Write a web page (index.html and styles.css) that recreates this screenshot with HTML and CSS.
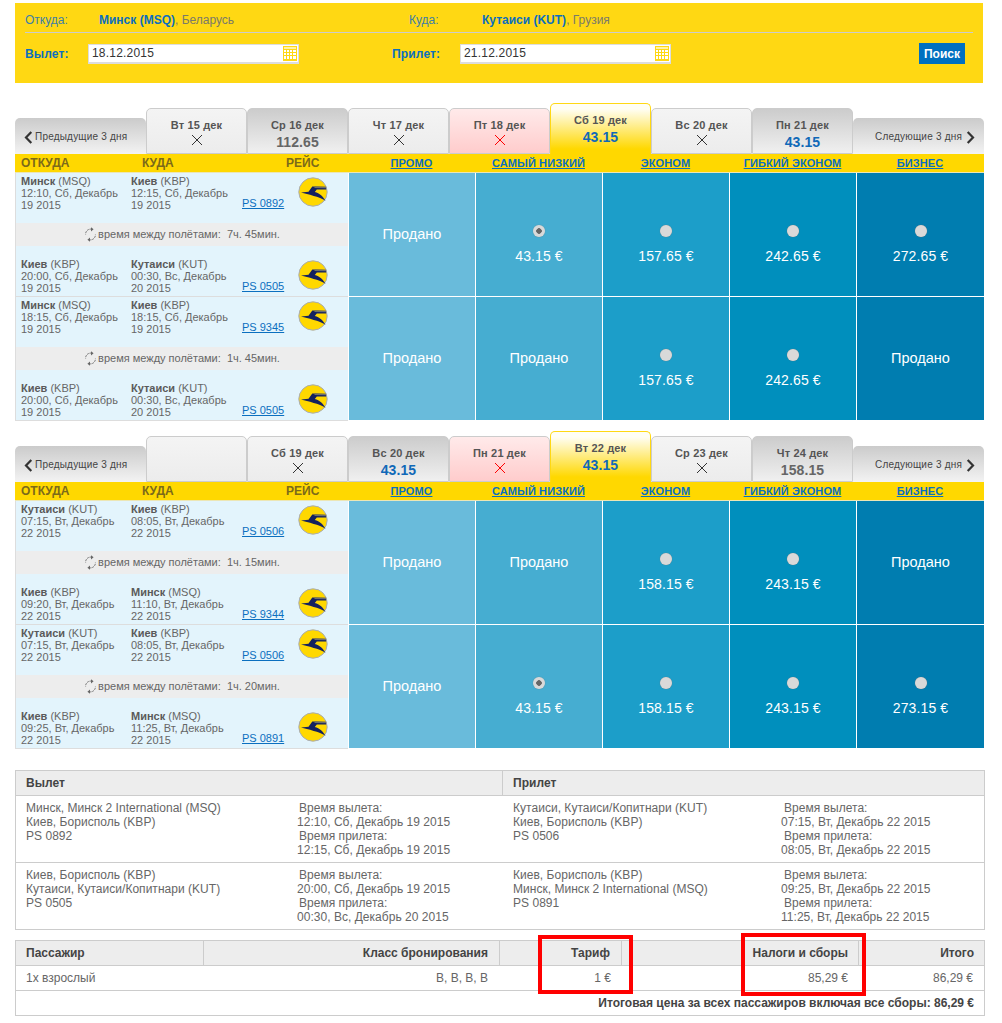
FILE: index.html
```html
<!DOCTYPE html>
<html lang="ru">
<head>
<meta charset="utf-8">
<title>Выбор рейса</title>
<link rel="stylesheet" href="styles.css">
</head>
<body>
<svg class="defs" width="0" height="0" aria-hidden="true">
  <defs>
    <symbol id="logo" viewBox="0 0 30 30">
      <circle cx="15" cy="15" r="14.2" fill="#ffd800" stroke="#a9adb5" stroke-width="1"/>
      <path d="M3 15.5 L10.5 14.8 L14.3 9.4 L28 9.8 L28.2 12.4 L18.8 12.4 L16.8 15 C21.5 16 25.4 19.6 27.6 24 C23 20.8 17 19 3 15.5Z" fill="#14215f"/>
      <path d="M17 9.5 L28 9.9 L28.2 11.2 L16.2 11Z" fill="#6d6f6e"/>
    </symbol>
    <symbol id="cross" viewBox="0 0 12 12">
      <path d="M1 1 L11 11 M11 1 L1 11" fill="none" stroke="currentColor" stroke-width="1"/>
    </symbol>
    <symbol id="cal" viewBox="0 0 14 15">
      <rect width="14" height="15" fill="#ffd813"/>
      <rect x="1" y="1" width="12" height="2" fill="#fff3a8"/>
      <g fill="#fff">
        <rect x="1" y="4" width="2" height="2"/><rect x="4" y="4" width="2" height="2"/><rect x="7" y="4" width="2" height="2"/><rect x="10" y="4" width="3" height="2"/>
        <rect x="1" y="7" width="2" height="2"/><rect x="4" y="7" width="2" height="2"/><rect x="7" y="7" width="2" height="2"/><rect x="10" y="7" width="3" height="2"/>
        <rect x="1" y="10" width="2" height="3"/><rect x="4" y="10" width="2" height="3"/><rect x="7" y="10" width="2" height="3"/><rect x="10" y="10" width="3" height="3"/>
      </g>
    </symbol>
    <symbol id="swap" viewBox="0 0 13 15">
      <path d="M7.5 2.2 A5 5 0 0 0 1.6 7.5 M5.5 12.8 A5 5 0 0 0 11.4 7.5" fill="none" stroke="#777" stroke-width="1" stroke-dasharray="2 .8"/>
      <path d="M7 .2 L9.6 2.3 L7 4.4Z M6 10.6 L3.4 12.7 L6 14.8Z" fill="#666"/>
    </symbol>
    <symbol id="chev-l" viewBox="0 0 9 13">
      <path d="M7.3 1 L2 6.5 L7.3 12" fill="none" stroke="#333" stroke-width="2.2"/>
    </symbol>
    <symbol id="chev-r" viewBox="0 0 9 13">
      <path d="M1.7 1 L7 6.5 L1.7 12" fill="none" stroke="#333" stroke-width="2.2"/>
    </symbol>
  </defs>
</svg>

<main class="page">
  <section class="search">
    <div class="search-route">
      <span class="lbl">Откуда:</span>
      <span class="place"><b>Минск (MSQ)</b>, Беларусь</span>
      <span class="lbl">Куда:</span>
      <span class="place"><b>Кутаиси (KUT)</b>, Грузия</span>
    </div>
    <div class="search-dates">
      <span class="lbl-b">Вылет:</span>
      <span class="date"><span>18.12.2015</span><svg class="cal"><use href="#cal"/></svg></span>
      <span class="lbl-b">Прилет:</span>
      <span class="date"><span>21.12.2015</span><svg class="cal"><use href="#cal"/></svg></span>
      <button class="go" type="button">Поиск</button>
    </div>
  </section>

  <section class="fares fares-out">
    <div class="tabs">
      <div class="nav nav-prev"><svg class="chev"><use href="#chev-l"/></svg>Предыдущие 3 дня</div>
      <div class="tab"><span class="d">Вт 15 дек</span><svg class="x"><use href="#cross"/></svg></div>
      <div class="tab tab-price"><span class="d">Ср 16 дек</span><span class="v">112.65</span></div>
      <div class="tab"><span class="d">Чт 17 дек</span><svg class="x"><use href="#cross"/></svg></div>
      <div class="tab tab-red"><span class="d">Пт 18 дек</span><svg class="x"><use href="#cross"/></svg></div>
      <div class="tab tab-sel"><span class="d">Сб 19 дек</span><span class="v v-blue">43.15</span></div>
      <div class="tab"><span class="d">Вс 20 дек</span><svg class="x"><use href="#cross"/></svg></div>
      <div class="tab tab-price"><span class="d">Пн 21 дек</span><span class="v v-blue">43.15</span></div>
      <div class="nav nav-next">Следующие 3 дня<svg class="chev"><use href="#chev-r"/></svg></div>
    </div>
    <div class="head">
      <div class="head-left"><span>ОТКУДА</span><span>КУДА</span><span>РЕЙС</span></div>
      <a href="#">ПРОМО</a><a href="#">САМЫЙ НИЗКИЙ</a><a href="#">ЭКОНОМ</a><a href="#">ГИБКИЙ ЭКОНОМ</a><a href="#">БИЗНЕС</a>
    </div>

    <div class="row">
      <div class="trip">
        <div class="seg seg-a">
          <div class="pt"><b>Минск</b> (MSQ)<br>12:10, Сб, Декабрь<br>19 2015</div>
          <div class="pt"><b>Киев</b> (KBP)<br>12:15, Сб, Декабрь<br>19 2015</div>
          <a class="no" href="#">PS 0892</a>
          <svg class="logo"><use href="#logo"/></svg>
        </div>
        <div class="conn"><svg class="swap"><use href="#swap"/></svg>время между полётами:&nbsp; 7ч. 45мин.</div>
        <div class="seg seg-b">
          <div class="pt"><b>Киев</b> (KBP)<br>20:00, Сб, Декабрь<br>19 2015</div>
          <div class="pt"><b>Кутаиси</b> (KUT)<br>00:30, Вс, Декабрь<br>20 2015</div>
          <a class="no" href="#">PS 0505</a>
          <svg class="logo"><use href="#logo"/></svg>
        </div>
      </div>
      <div class="fare c1 sold">Продано</div>
      <div class="fare c2"><i class="radio on"></i><span>43.15 €</span></div>
      <div class="fare c3"><i class="radio"></i><span>157.65 €</span></div>
      <div class="fare c4"><i class="radio"></i><span>242.65 €</span></div>
      <div class="fare c5"><i class="radio"></i><span>272.65 €</span></div>
    </div>

    <div class="row">
      <div class="trip">
        <div class="seg seg-a">
          <div class="pt"><b>Минск</b> (MSQ)<br>18:15, Сб, Декабрь<br>19 2015</div>
          <div class="pt"><b>Киев</b> (KBP)<br>18:15, Сб, Декабрь<br>19 2015</div>
          <a class="no" href="#">PS 9345</a>
          <svg class="logo"><use href="#logo"/></svg>
        </div>
        <div class="conn"><svg class="swap"><use href="#swap"/></svg>время между полётами:&nbsp; 1ч. 45мин.</div>
        <div class="seg seg-b">
          <div class="pt"><b>Киев</b> (KBP)<br>20:00, Сб, Декабрь<br>19 2015</div>
          <div class="pt"><b>Кутаиси</b> (KUT)<br>00:30, Вс, Декабрь<br>20 2015</div>
          <a class="no" href="#">PS 0505</a>
          <svg class="logo"><use href="#logo"/></svg>
        </div>
      </div>
      <div class="fare c1 sold">Продано</div>
      <div class="fare c2 sold">Продано</div>
      <div class="fare c3"><i class="radio"></i><span>157.65 €</span></div>
      <div class="fare c4"><i class="radio"></i><span>242.65 €</span></div>
      <div class="fare c5 sold">Продано</div>
    </div>
  </section>

  <section class="fares fares-back">
    <div class="tabs">
      <div class="nav nav-prev"><svg class="chev"><use href="#chev-l"/></svg>Предыдущие 3 дня</div>
      <div class="tab"></div>
      <div class="tab"><span class="d">Сб 19 дек</span><svg class="x"><use href="#cross"/></svg></div>
      <div class="tab tab-price"><span class="d">Вс 20 дек</span><span class="v v-blue">43.15</span></div>
      <div class="tab tab-red"><span class="d">Пн 21 дек</span><svg class="x"><use href="#cross"/></svg></div>
      <div class="tab tab-sel"><span class="d">Вт 22 дек</span><span class="v v-blue">43.15</span></div>
      <div class="tab"><span class="d">Ср 23 дек</span><svg class="x"><use href="#cross"/></svg></div>
      <div class="tab tab-price"><span class="d">Чт 24 дек</span><span class="v">158.15</span></div>
      <div class="nav nav-next">Следующие 3 дня<svg class="chev"><use href="#chev-r"/></svg></div>
    </div>
    <div class="head">
      <div class="head-left"><span>ОТКУДА</span><span>КУДА</span><span>РЕЙС</span></div>
      <a href="#">ПРОМО</a><a href="#">САМЫЙ НИЗКИЙ</a><a href="#">ЭКОНОМ</a><a href="#">ГИБКИЙ ЭКОНОМ</a><a href="#">БИЗНЕС</a>
    </div>

    <div class="row">
      <div class="trip">
        <div class="seg seg-a">
          <div class="pt"><b>Кутаиси</b> (KUT)<br>07:15, Вт, Декабрь<br>22 2015</div>
          <div class="pt"><b>Киев</b> (KBP)<br>08:05, Вт, Декабрь<br>22 2015</div>
          <a class="no" href="#">PS 0506</a>
          <svg class="logo"><use href="#logo"/></svg>
        </div>
        <div class="conn"><svg class="swap"><use href="#swap"/></svg>время между полётами:&nbsp; 1ч. 15мин.</div>
        <div class="seg seg-b">
          <div class="pt"><b>Киев</b> (KBP)<br>09:20, Вт, Декабрь<br>22 2015</div>
          <div class="pt"><b>Минск</b> (MSQ)<br>11:10, Вт, Декабрь<br>22 2015</div>
          <a class="no" href="#">PS 9344</a>
          <svg class="logo"><use href="#logo"/></svg>
        </div>
      </div>
      <div class="fare c1 sold">Продано</div>
      <div class="fare c2 sold">Продано</div>
      <div class="fare c3"><i class="radio"></i><span>158.15 €</span></div>
      <div class="fare c4"><i class="radio"></i><span>243.15 €</span></div>
      <div class="fare c5 sold">Продано</div>
    </div>

    <div class="row">
      <div class="trip">
        <div class="seg seg-a">
          <div class="pt"><b>Кутаиси</b> (KUT)<br>07:15, Вт, Декабрь<br>22 2015</div>
          <div class="pt"><b>Киев</b> (KBP)<br>08:05, Вт, Декабрь<br>22 2015</div>
          <a class="no" href="#">PS 0506</a>
          <svg class="logo"><use href="#logo"/></svg>
        </div>
        <div class="conn"><svg class="swap"><use href="#swap"/></svg>время между полётами:&nbsp; 1ч. 20мин.</div>
        <div class="seg seg-b">
          <div class="pt"><b>Киев</b> (KBP)<br>09:25, Вт, Декабрь<br>22 2015</div>
          <div class="pt"><b>Минск</b> (MSQ)<br>11:25, Вт, Декабрь<br>22 2015</div>
          <a class="no" href="#">PS 0891</a>
          <svg class="logo"><use href="#logo"/></svg>
        </div>
      </div>
      <div class="fare c1 sold">Продано</div>
      <div class="fare c2"><i class="radio on"></i><span>43.15 €</span></div>
      <div class="fare c3"><i class="radio"></i><span>158.15 €</span></div>
      <div class="fare c4"><i class="radio"></i><span>243.15 €</span></div>
      <div class="fare c5"><i class="radio"></i><span>273.15 €</span></div>
    </div>
  </section>

  <section class="legs">
    <div class="legs-head"><div>Вылет</div><div>Прилет</div></div>
    <div class="legs-row">
      <div class="leg">
        <div>Минск, Минск 2 International (MSQ)<br>Киев, Борисполь (KBP)<br>PS 0892</div>
        <div class="times"><span>Время вылета:</span><br>12:10, Сб, Декабрь 19 2015<br><span>Время прилета:</span><br>12:15, Сб, Декабрь 19 2015</div>
      </div>
      <div class="leg">
        <div>Кутаиси, Кутаиси/Копитнари (KUT)<br>Киев, Борисполь (KBP)<br>PS 0506</div>
        <div class="times"><span>Время вылета:</span><br>07:15, Вт, Декабрь 22 2015<br><span>Время прилета:</span><br>08:05, Вт, Декабрь 22 2015</div>
      </div>
    </div>
    <div class="legs-row">
      <div class="leg">
        <div>Киев, Борисполь (KBP)<br>Кутаиси, Кутаиси/Копитнари (KUT)<br>PS 0505</div>
        <div class="times"><span>Время вылета:</span><br>20:00, Сб, Декабрь 19 2015<br><span>Время прилета:</span><br>00:30, Вс, Декабрь 20 2015</div>
      </div>
      <div class="leg">
        <div>Киев, Борисполь (KBP)<br>Минск, Минск 2 International (MSQ)<br>PS 0891</div>
        <div class="times"><span>Время вылета:</span><br>09:25, Вт, Декабрь 22 2015<br><span>Время прилета:</span><br>11:25, Вт, Декабрь 22 2015</div>
      </div>
    </div>
  </section>

  <section class="price">
    <div class="price-head">
      <div class="left">Пассажир</div><div>Класс бронирования</div><div>Тариф</div><div>Налоги и сборы</div><div>Итого</div>
    </div>
    <div class="price-row">
      <div class="left">1x взрослый</div><div>B, B, B, B</div><div>1 €</div><div>85,29 €</div><div>86,29 €</div>
    </div>
    <div class="price-total">Итоговая цена за всех пассажиров включая все сборы: 86,29 €</div>
    <div class="mark mark-fare"></div>
    <div class="mark mark-tax"></div>
  </section>
</main>
</body>
</html>
```
FILE: styles.css
```css
* { box-sizing: border-box; }
html, body { margin: 0; padding: 0; background: #fff; }
body { font: 12px/14px "Liberation Sans", Arial, sans-serif; color: #666; }
.defs { position: absolute; }
.page { width: 970px; margin: 3px 0 0 15px; }

/* search panel */
.search { height: 80px; width: 968px; background: #ffd813; padding: 0 10px; }
.search-route {
  display: grid; grid-template-columns: 74px 310px 73px 1fr;
  height: 30px; align-items: center; border-bottom: 1px solid #ccc; padding-top: 4px;
}
.lbl { color: #3d7fa6; }
.place { color: #7a7a6a; }
.place b { color: #0b6fbf; }
.search-dates {
  display: grid; grid-template-columns: 63px 304px 68px 459px 46px;
  align-items: center; margin-top: 10px;
}
.lbl-b { font-weight: bold; color: #0b6fbf; letter-spacing: .15px; }
.date {
  display: flex; justify-content: space-between; align-items: center;
  width: 211px; height: 20px; background: #fff;
  border: 1px solid #ddd; border-width: 1px 1px 2px 1px; padding: 0 1px 0 3px;
  color: #333; letter-spacing: .2px;
}
.cal { width: 14px; height: 15px; }
.go {
  width: 46px; height: 21px; padding: 0; border: 0; background: #0070c0; color: #fff;
  font: bold 12px "Liberation Sans", Arial, sans-serif;
}

/* fare blocks */
.fares-out { margin-top: 20px; }
.fares-back { margin-top: 10px; }
.tabs { display: flex; align-items: flex-end; height: 51px; width: 969px; }
.nav {
  display: flex; align-items: center; height: 36px; width: 131px; flex: none; padding-top: 2px;
  background: linear-gradient(#cbcbcb, #f3f3f3); border-radius: 5px 5px 0 0;
  font-size: 10px; letter-spacing: .2px; color: #444;
}
.nav-prev { padding-left: 9px; gap: 2px; }
.nav-next { padding-left: 22px; gap: 4px; }
.chev { width: 9px; height: 13px; flex: none; }
.tab {
  display: flex; flex-direction: column; align-items: center; flex: none;
  width: 101px; height: 46px; padding-top: 10px;
  border: 1px solid #ccc; border-bottom-width: 1px; border-radius: 5px 5px 0 0;
  background: linear-gradient(#f4f4f4, #ececec);
}
.tab-price { background: linear-gradient(#cccccc, #f0f0f0); }
.tab-red { background: linear-gradient(#ffeaea, #ffcccc); color: #f00; }
.tab-sel {
  height: 51px; background: linear-gradient(#fffef4 10%, #ffd800 90%);
  border-color: #ffd813; border-bottom: 0;
}
.d { font-weight: bold; font-size: 11px; line-height: 13px; color: #555; letter-spacing: .15px; }
.v { font-weight: bold; font-size: 14px; line-height: 16px; margin-top: 2px; color: #666; letter-spacing: .1px; }
.v-blue { color: #1069b8; }
.x { width: 12px; height: 12px; margin-top: 2px; color: #333; }
.tab-red .x { color: #f00; }

.head {
  display: grid; grid-template-columns: 333px 127px 127px 127px 127px 128px;
  height: 19px; width: 969px; background: #ffd800; border-bottom: 1px solid #ece6b5; align-items: center;
  font-size: 11px;
}
.head a { text-align: center; font-weight: bold; color: #0b6fbf; letter-spacing: .1px; }
.head-left { display: grid; grid-template-columns: 121px 144px 60px; padding-left: 6px; font-weight: bold; font-size: 12px; color: #7b6a1a; }

.row {
  display: grid; grid-template-columns: 333px 127px 127px 127px 127px 128px;
  height: 124px; width: 969px;
}
.trip { border-left: 1px solid #ddd; border-bottom: 1px solid #ddd; background: #e3f4fc; }
.seg { display: flex; height: 50px; padding-left: 5px; font-size: 11px; line-height: 12px; }
.seg-a { padding-top: 2px; }
.seg-b { padding-top: 12px; }
.pt { width: 110px; flex: none; white-space: nowrap; }
.pt:nth-child(2) { width: 111px; }
.pt b { color: #5a5a5a; }
.no { margin-top: 22px; width: 56px; flex: none; color: #0b6fbf; }
.logo { width: 30px; height: 30px; margin-top: 2px; flex: none; }
.conn {
  display: flex; justify-content: center; align-items: center; height: 23px; padding-bottom: 1px;
  background: #ededed; font-size: 11px;
}
.swap { width: 13px; height: 15px; margin-right: 1px; }

.fare {
  display: flex; flex-direction: column; align-items: center;
  border-left: 1px solid #fff; border-bottom: 1px solid #fff;
  padding-top: 52px; color: #fff; font-size: 14px; letter-spacing: .1px; line-height: 16px;
}
.fare span { margin-top: 11px; }
.sold { justify-content: center; padding-top: 0; font-size: 14.5px; letter-spacing: 0; padding-bottom: 1px; }
.c1 { background: #69bbdb; }
.c2 { background: #46add1; }
.c3 { background: #1c9ec9; }
.c4 { background: #008fbd; }
.c5 { background: #007db0; }
.radio {
  display: block; width: 12px; height: 12px; border-radius: 50%;
  background: #d9d9d9; box-shadow: 0 0 1px #777;
}
.radio.on { background: radial-gradient(circle, #666 0 2.5px, #d9d9d9 3px); }

/* legs summary */
.legs { margin-top: 21px; width: 970px; border: 1px solid #ccc; letter-spacing: .03px; }
.legs-head {
  display: grid; grid-template-columns: 486px 1fr; height: 25px; background: #ededed;
  border-bottom: 1px solid #ccc; font-weight: bold; color: #444; align-items: center;
}
.legs-head div { padding-left: 10px; height: 100%; line-height: 24px; }
.legs-head div + div { border-left: 1px solid #ccc; }
.legs-row { display: grid; grid-template-columns: 486px 1fr; height: 67px; border-bottom: 1px solid #ccc; }
.legs-row:last-child { border-bottom: 0; height: 66px; }
.leg { display: grid; grid-template-columns: 271px 1fr; padding: 5px 0 0 10px; }
.leg + .leg { grid-template-columns: 268px 1fr; padding-left: 11px; }
.times { white-space: nowrap; }
.times span { padding-left: 2px; }
.leg + .leg .times span { padding-left: 3px; }

/* price summary */
.price { position: relative; margin-top: 10px; width: 970px; border: 1px solid #ccc; }
.price-head, .price-row {
  display: grid; grid-template-columns: 188px 296px 122px 237px 1fr;
  height: 25px; border-bottom: 1px solid #ccc; text-align: right; align-items: center;
}
.price-head { background: #ededed; font-weight: bold; color: #444; }
.price-head div { height: 100%; line-height: 24px; padding-right: 10px; border-right: 1px solid #ccc; }
.price-head div:nth-child(2), .price-head div:nth-child(3) { padding-right: 11px; }
.price-head div:last-child { border-right: 0; }
.price-row div { padding-right: 11px; }
.price-row div:nth-child(2) { padding-right: 12px; }
.price-head .left, .price-row .left { text-align: left; padding-left: 10px; }
.price-total { height: 24px; line-height: 24px; text-align: right; padding-right: 10px; font-weight: bold; color: #444; }
.mark { position: absolute; border: 4px solid #f00; }
.mark-fare { left: 522px; top: -6px; width: 95px; height: 59px; }
.mark-tax { left: 725px; top: -8px; width: 125px; height: 63px; }
```
